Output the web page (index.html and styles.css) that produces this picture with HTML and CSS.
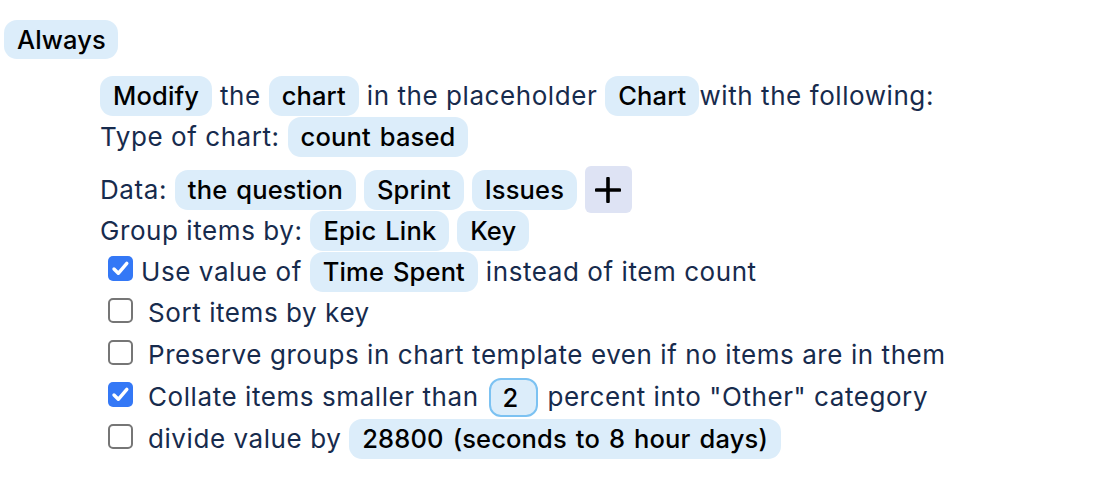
FILE: index.html
```html
<!DOCTYPE html>
<html lang="en">
<head>
<meta charset="utf-8">
<title>Chart action</title>
<link rel="stylesheet" href="styles.css">
</head>
<body>
<div class="page">
  <div class="head"><span class="pill always">Always</span></div>
  <div class="action">
    <div class="row r1"><span class="pill">Modify</span> the <span class="pill">chart</span> in the placeholder <span class="pill">Chart</span>with the following:</div>
    <div class="row r2">Type of chart: <span class="pill">count based</span></div>
    <div class="row r3">Data: <span class="pill">the question</span> <span class="pill">Sprint</span> <span class="pill">Issues</span> <button class="add" type="button" aria-label="Add"><svg width="26" height="26" viewBox="0 0 26 26"><path d="M13 1.5V24.5M1.5 13H24.5" stroke="#000" stroke-width="3.6" stroke-linecap="round" fill="none"/></svg></button></div>
    <div class="row r4">Group items by: <span class="pill">Epic Link</span> <span class="pill">Key</span></div>
    <div class="row r5"><span class="cb checked tight"><svg viewBox="0 0 25 25" width="25" height="25"><path d="M6 13l4.3 4.3 8.5-10" stroke="#fff" stroke-width="3.4" fill="none" stroke-linecap="round" stroke-linejoin="round"/></svg></span>Use value of <span class="pill">Time Spent</span> instead of item count</div>
    <div class="row chk"><span class="cb"></span>Sort items by key</div>
    <div class="row chk"><span class="cb"></span>Preserve groups in chart template even if no items are in them</div>
    <div class="row chk"><span class="cb checked"><svg viewBox="0 0 25 25" width="25" height="25"><path d="M6 13l4.3 4.3 8.5-10" stroke="#fff" stroke-width="3.4" fill="none" stroke-linecap="round" stroke-linejoin="round"/></svg></span>Collate items smaller than <input class="num" type="text" value="2"> percent into "Other" category</div>
    <div class="row chk"><span class="cb"></span>divide value by <span class="pill">28800 (seconds to 8 hour days)</span></div>
  </div>
</div>
</body>
</html>
```
FILE: styles.css
```css
html, body {
  margin: 0;
  padding: 0;
  background: #ffffff;
}
body {
  font-family: Inter, "Noto Sans", "Liberation Sans", sans-serif;
  font-size: 26px;
  letter-spacing: 0.57px;
  color: #172b4d;
}
.page {
  padding: 20px 0 0 4px;
}
.head {
  height: 39px;
  line-height: 39px;
}
.pill {
  display: inline-block;
  height: 40px;
  line-height: 40px;
  padding: 0 13px;
  border-radius: 13px;
  background: #dcedfa;
  color: #000;
  font-size: 25.5px;
  font-weight: 500;
  letter-spacing: 0.15px;
  word-spacing: 2px;
  white-space: nowrap;
  vertical-align: baseline;
}
.always {
  height: 39px;
  line-height: 39px;
  padding: 0 12px 0 13px;
}
.action {
  margin: 17px 0 0 96px;
}
.row {
  white-space: nowrap;
  height: 40px;
  line-height: 40px;
}
.r2 { margin-top: 1px; }
.r3 { margin-top: 12px; height: 41px; line-height: 41px; }
.r4 { height: 41px; line-height: 41px; }
.r5 { height: 41px; line-height: 41px; }
.chk { height: 42px; line-height: 42px; }
.add {
  display: inline-flex;
  align-items: center;
  justify-content: center;
  vertical-align: top;
  width: 47px;
  height: 47px;
  margin: -3px 0 -4px;
  padding: 0;
  border: none;
  border-radius: 6px;
  background: #dee3f4;
}
.cb {
  display: inline-block;
  vertical-align: top;
  box-sizing: border-box;
  width: 25px;
  height: 25px;
  margin: 6px 15px 0 8px;
  border: 2px solid #767676;
  border-radius: 5px;
  background: #fff;
}
.cb svg { display: block; }
.cb.checked {
  border: none;
  background: #3478f6;
}
.cb.tight {
  margin-top: 5px;
  margin-right: 8px;
}
.num {
  display: inline-block;
  vertical-align: top;
  box-sizing: border-box;
  width: 49px;
  height: 39px;
  margin: 2px 2px 0 2px;
  padding: 0 0 0 12px;
  border: 2px solid #7cc2f2;
  border-radius: 12px;
  background: #dcedfa;
  font-family: Inter, "Noto Sans", "Liberation Sans", sans-serif;
  font-size: 25.5px;
  font-weight: 500;
  color: #000;
  outline: none;
}
```
